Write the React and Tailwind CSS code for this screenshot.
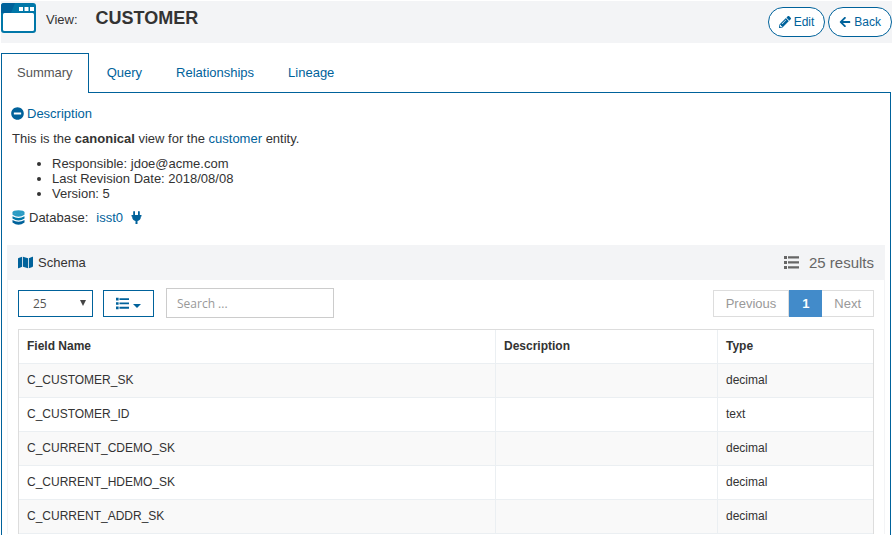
import { FaArrowLeft, FaMap, FaMinusCircle, FaPencilAlt } from "react-icons/fa";

const tabs = ["Query", "Relationships", "Lineage"];

const fields = [
  { name: "C_CUSTOMER_SK", type: "decimal" },
  { name: "C_CUSTOMER_ID", type: "text" },
  { name: "C_CURRENT_CDEMO_SK", type: "decimal" },
  { name: "C_CURRENT_HDEMO_SK", type: "decimal" },
  { name: "C_CURRENT_ADDR_SK", type: "decimal" },
];

function ViewIcon() {
  return (
    <svg width="35" height="32" viewBox="0 0 35 32" className="shrink-0" aria-hidden="true">
      <rect x="0" y="2" width="35" height="30" rx="3" fill="#0077a8" />
      <path d="M3 2H14L10 12H0V5Q0 2 3 2Z" fill="#00629b" />
      <rect x="2" y="12" width="31" height="18" rx="1.500" fill="#fff" />
      <path d="M18 6h4v4h-4zM23.500 6h4v4h-4zM29 6h4v4h-4z" fill="#fff" />
    </svg>
  );
}

function ListIcon({ size, className }) {
  return (
    <svg width={size} height={size} viewBox="0 0 15 15" fill="currentColor" className={className} aria-hidden="true">
      <path d="M0 1h3v3H0zM4 1.300h11v2.200H4zM0 6h3v3H0zM4 6.300h11v2.200H4zM0 11h3v3H0zM4 11.300h11v2.200H4z" />
    </svg>
  );
}

function DatabaseIcon() {
  return (
    <svg width="13" height="15" viewBox="0 0 13 15" className="shrink-0" aria-hidden="true">
      <path d="M0.500 10q6 3.500 12 0v2.500q-6 4.500-12 0z" fill="#00629b" />
      <path d="M0.500 6.200q6 3.500 12 0v2.400q-6 4-12 0z" fill="#0077a8" />
      <path d="M0.500 2.200q6 3 12 0v2.600q-6 4-12 0z" fill="#2b9cc4" />
      <ellipse cx="6.500" cy="2.200" rx="6" ry="2" fill="#2b9cc4" />
    </svg>
  );
}

function PlugIcon() {
  return (
    <svg width="11" height="13" viewBox="0 0 11 13" fill="currentColor" className="ml-2 text-[#00629b]" aria-hidden="true">
      <path d="M2.200 1q0-1 .9-1t.9 1v3h3V1q0-1 .9-1t.9 1v3H10.500v1.500H9.800V6.500Q9.500 9.300 6.500 9.900V13h-2V9.900Q1.500 9.300 1.200 6.500V5.500H.5V4h1.700z" />
    </svg>
  );
}

export default function App() {
  return (
    <div className="flex h-screen flex-col overflow-hidden bg-white pt-px pl-px font-['Liberation_Sans',Arial,sans-serif] text-[13px] leading-[15px] text-[#333]">
      <header className="flex h-[42px] shrink-0 items-start bg-[#f3f4f6]">
        <div className="flex flex-1 items-start">
          <ViewIcon />
          <span className="ml-2.5 pt-[11px]">View:</span>
          <h1 className="ml-[18px] pt-[5px] text-lg leading-6 font-bold">CUSTOMER</h1>
        </div>
        <div className="flex gap-[3px] pt-1.5 text-[12px] text-[#00629b]">
          <button className="flex h-[30px] items-center gap-[3px] rounded-full border border-[#00629b] bg-white px-2.5">
            <FaPencilAlt size={12} />
            Edit
          </button>
          <button className="flex h-[30px] items-center gap-[3px] rounded-full border border-[#00629b] bg-white px-2.5">
            <FaArrowLeft size={12} />
            Back
          </button>
        </div>
      </header>

      <nav className="mt-2.5 mr-px flex shrink-0 text-[#00629b]">
        <a href="#summary" className="h-10 border border-b-0 border-[#00629b] px-[15px] pt-[11px] text-[#555]">
          Summary
        </a>
        <div className="flex flex-1 gap-[34px] border-b border-[#00629b] pt-3 pl-[18px]">
          {tabs.map((tab) => (
            <a key={tab} href={"#" + tab.toLowerCase()}>
              {tab}
            </a>
          ))}
        </div>
      </nav>

      <main className="mr-px flex-1 border-x border-[#00629b] px-[5px] pt-[13px]">
        <section className="px-[5px]">
          <button className="-ml-px flex items-center gap-[3px] text-[#00629b]">
            <FaMinusCircle size={13} />
            Description
          </button>
          <p className="mt-2.5">
            This is the <b>canonical</b> view for the{" "}
            <a href="#customer" className="text-[#00629b]">
              customer
            </a>{" "}
            entity.
          </p>
          <ul className="mt-2.5 list-disc pl-10">
            <li>Responsible: jdoe@acme.com</li>
            <li>Last Revision Date: 2018/08/08</li>
            <li>Version: 5</li>
          </ul>
          <div className="mt-[9px] flex items-center">
            <DatabaseIcon />
            <span className="ml-1">Database:</span>
            <a href="#isst0" className="ml-2 text-[#00629b]">
              isst0
            </a>
            <PlugIcon />
          </div>
        </section>

        <section className="mt-5 border-x border-[#f3f4f6]">
          <div className="flex h-[35px] items-center bg-[#f3f4f6] px-2.5">
            <FaMap size={15} className="text-[#00629b]" />
            <h2 className="ml-[5px] flex-1">Schema</h2>
            <ListIcon size={15} className="text-[#666]" />
            <span className="ml-2.5 text-[15px] text-[#666]">25 results</span>
          </div>

          <div className="px-2.5 pt-2">
            <div className="flex items-start">
              <div className="relative mt-0.5 h-[27px] w-[75px]">
                <select
                  aria-label="Rows per page"
                  className="h-full w-full appearance-none border border-[#00629b] bg-white pl-3.5 font-['Open_Sans',sans-serif] text-[12px] text-[#555]"
                >
                  <option>25</option>
                </select>
                <svg width="6" height="6" viewBox="0 0 6 6" className="pointer-events-none absolute top-[10px] right-[7px]" aria-hidden="true">
                  <path d="M0 0h6L3 6z" fill="#444" />
                </svg>
              </div>
              <button aria-label="Columns" className="mt-0.5 ml-2.5 flex h-[27px] w-[51px] items-center justify-center gap-1 border border-[#00629b] text-[#00629b]">
                <ListIcon size={13} />
                <svg width="8" height="9" viewBox="0 0 8 9" fill="currentColor" aria-hidden="true">
                  <path d="M0 5h8L4 9z" />
                </svg>
              </button>
              <input
                type="text"
                aria-label="Search"
                placeholder="Search ..."
                className="ml-3 h-[30px] w-[168px] border border-[#ccc] px-2.5 font-['Open_Sans',sans-serif] text-[12px] placeholder:text-[#999]"
              />
              <div className="mt-0.5 ml-auto flex h-[27px] text-[#999]">
                <button className="border border-[#ddd] px-3">Previous</button>
                <button className="w-[33px] bg-[#428bca] font-bold text-white">1</button>
                <button className="border border-l-0 border-[#ddd] px-3">Next</button>
              </div>
            </div>

            <table className="mt-[11px] w-full table-fixed border-separate border-spacing-0 border border-b-0 border-[#ddd] text-left text-[12px]">
              <thead>
                <tr className="h-[34px]">
                  <th className="border-b border-[#ebeff2] px-2">Field Name</th>
                  <th className="w-[26%] border-b border-l border-[#ebeff2] px-2">Description</th>
                  <th className="w-[156px] border-b border-l border-[#ebeff2] px-2">Type</th>
                </tr>
              </thead>
              <tbody>
                {fields.map((field) => (
                  <tr key={field.name} className="h-[34px] odd:bg-[#f9f9f9]">
                    <td className="border-b border-[#ebeff2] px-2">{field.name}</td>
                    <td className="border-b border-l border-[#ebeff2] px-2"></td>
                    <td className="border-b border-l border-[#ebeff2] px-2">{field.type}</td>
                  </tr>
                ))}
              </tbody>
            </table>
          </div>
        </section>
      </main>
    </div>
  );
}
